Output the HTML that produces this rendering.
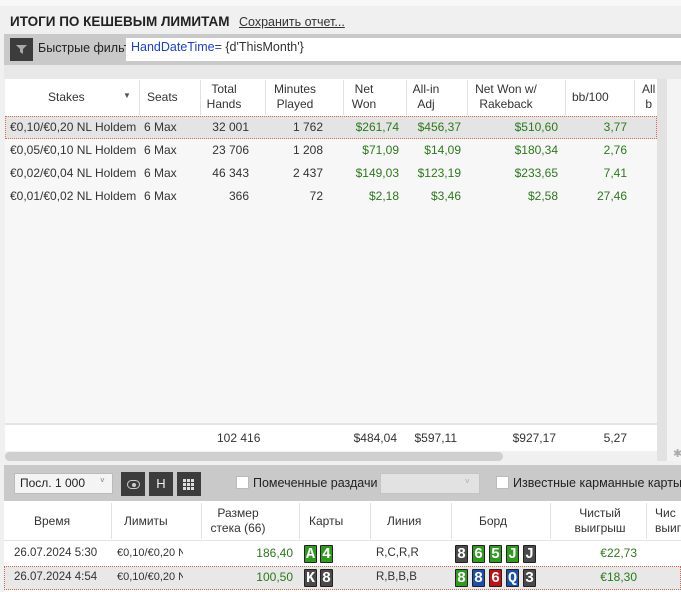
<!DOCTYPE html>
<html><head><meta charset="utf-8"><style>
*{margin:0;padding:0;box-sizing:border-box}
body{width:681px;height:592px;overflow:hidden;background:#f0f0f0;font-family:"Liberation Sans","Noto Sans CJK SC",sans-serif;font-size:12px;color:#333;position:relative}
.a{position:absolute;white-space:nowrap}
.r{text-align:right}.c{text-align:center}
.g{color:#2a7a1a}
.card{position:absolute;width:13px;height:18px;color:#fff;font:bold 15px/18px "Liberation Mono",monospace;text-align:center;border:1px solid #222;border-radius:1px}
.k{background:#4a4a4a}.gr{background:#2e9a1e}.rd{background:#c41010}.bl{background:#1a4fb0}
.hd{color:#333;line-height:15px}
.vl{position:absolute;width:1px;background:#e0e0e0}
</style></head><body>
<div class="a" style="left:0;top:0;width:681px;height:6px;background:#f8f8f8"></div>
<div class="a" style="left:10px;top:14px;font-weight:bold;font-size:13.5px;color:#222">ИТОГИ ПО КЕШЕВЫМ ЛИМИТАМ</div>
<div class="a" style="left:239px;top:15px;font-size:12.5px;text-decoration:underline;color:#333">Сохранить отчет...</div>
<div class="a" style="left:4px;top:34px;width:677px;height:31px;background:#c9c9c9"></div>
<div class="a" style="left:10px;top:38px;width:23px;height:23px;background:#3c3c3c"></div>
<svg class="a" style="left:15px;top:44px" width="13" height="11"><path d="M1 1H12L8 5V10L5 8V5Z" fill="#aaa"/></svg>
<div class="a" style="left:38px;top:41px;font-size:12.5px;color:#222">Быстрые фильт</div>
<div class="a" style="left:126px;top:38px;width:555px;height:23px;background:#fff;padding:2px 5px;font-size:12.5px"><span style="color:#1a3fd0">HandDateTime=</span> {d'ThisMonth'}</div>
<div class="a" style="left:4px;top:65px;width:677px;height:14px;background:#e8e8e8"></div>
<!-- table -->
<div class="a" style="left:5px;top:79px;width:652px;height:372px;background:#f7f7f7"></div>
<div class="a" style="left:5px;top:79px;width:652px;height:37px;background:#fff"></div>
<div class="vl" style="left:139px;top:80px;height:35px"></div><div class="vl" style="left:200px;top:80px;height:35px"></div><div class="vl" style="left:265px;top:80px;height:35px"></div><div class="vl" style="left:343px;top:80px;height:35px"></div><div class="vl" style="left:406px;top:80px;height:35px"></div><div class="vl" style="left:467px;top:80px;height:35px"></div><div class="vl" style="left:565px;top:80px;height:35px"></div><div class="vl" style="left:634px;top:80px;height:35px"></div>
<div class="a hd" style="left:48px;top:90px">Stakes</div>
<div class="a" style="left:123px;top:91px;font-size:8px;color:#555">▼</div>
<div class="a hd" style="left:147px;top:90px">Seats</div>
<div class="a hd c" style="left:200px;top:82px;width:48px">Total<br>Hands</div>
<div class="a hd c" style="left:266px;top:82px;width:58px">Minutes<br>Played</div>
<div class="a hd c" style="left:343px;top:82px;width:42px">Net<br>Won</div>
<div class="a hd c" style="left:406px;top:82px;width:40px">All-in<br>Adj</div>
<div class="a hd c" style="left:466px;top:82px;width:80px">Net Won w/<br>Rakeback</div>
<div class="a hd" style="left:572px;top:90px">bb/100</div>
<div class="a hd" style="left:642px;top:82px">All<br>&nbsp;b</div>
<div class="a" style="left:5px;top:116px;width:652px;height:23px;background:#e4e4e4;border:1px dotted #d07050"></div>
<div class="a" style="left:10px;top:116px;line-height:23px">€0,10/€0,20 NL Holdem<br>€0,05/€0,10 NL Holdem<br>€0,02/€0,04 NL Holdem<br>€0,01/€0,02 NL Holdem</div>
<div class="a" style="left:144px;top:116px;line-height:23px">6 Max<br>6 Max<br>6 Max<br>6 Max</div>
<div class="a r" style="left:200px;top:116px;width:49px;line-height:23px">32 001<br>23 706<br>46 343<br>366</div>
<div class="a r" style="left:266px;top:116px;width:57px;line-height:23px">1 762<br>1 208<br>2 437<br>72</div>
<div class="a r g" style="left:340px;top:116px;width:59px;line-height:23px">$261,74<br>$71,09<br>$149,03<br>$2,18</div>
<div class="a r g" style="left:400px;top:116px;width:61px;line-height:23px">$456,37<br>$14,09<br>$123,19<br>$3,46</div>
<div class="a r g" style="left:470px;top:116px;width:88px;line-height:23px">$510,60<br>$180,34<br>$233,65<br>$2,58</div>
<div class="a r g" style="left:580px;top:116px;width:47px;line-height:23px">3,77<br>2,76<br>7,41<br>27,46</div>
<div class="a" style="left:5px;top:423px;width:652px;height:28px;background:#fff;border-top:2px solid #e4e4e4"></div>
<div class="a" style="left:217px;top:431px">102 416</div>
<div class="a r" style="left:340px;top:431px;width:57px">$484,04</div>
<div class="a r" style="left:400px;top:431px;width:57px">$597,11</div>
<div class="a r" style="left:470px;top:431px;width:86px">$927,17</div>
<div class="a r" style="left:580px;top:431px;width:47px">5,27</div>
<div class="a" style="left:5px;top:452px;width:498px;height:9px;background:#cfcfcf;border-radius:5px"></div>
<div class="a" style="left:657px;top:79px;width:10px;height:382px;background:#e2e2e2"></div>
<div class="a" style="left:667px;top:79px;width:14px;height:382px;background:#f4f4f4"></div>
<div class="a" style="left:673px;top:447px;color:#aaa;font-size:11px">✱</div>
<!-- toolbar -->
<div class="a" style="left:4px;top:465px;width:677px;height:36px;background:#c9c9c9"></div>
<div class="a" style="left:14px;top:473px;width:99px;height:21px;background:#f4f4f4;border:1px solid #bbb;padding:2px 5px;font-size:12px;color:#222">Посл. 1 000<span style="position:absolute;left:85px;top:2px;font-size:8px;color:#777">˅</span></div>
<div class="a" style="left:121px;top:472px;width:24px;height:24px;background:#3c3c3c"></div>
<div class="a" style="left:127px;top:480px;width:13px;height:9px;border:1.5px solid #ccc;border-radius:5px"></div>
<div class="a" style="left:132px;top:483px;width:4px;height:4px;background:#ccc;border-radius:2px"></div>
<div class="a" style="left:149px;top:472px;width:24px;height:24px;background:#3c3c3c;color:#eee;text-align:center;line-height:24px;font-size:13px">H</div>
<div class="a" style="left:177px;top:472px;width:24px;height:24px;background:#3c3c3c"></div>
<div class="a" style="left:183px;top:478px;width:12px;height:12px;background:repeating-linear-gradient(90deg,#ddd 0 3px,transparent 3px 4px),#3c3c3c;-webkit-mask:repeating-linear-gradient(0deg,#000 0 3px,transparent 3px 4px)"></div>
<div class="a" style="left:236px;top:476px;width:13px;height:13px;background:#fff;border:1px solid #bbb"></div>
<div class="a" style="left:253px;top:476px;font-size:12.5px;color:#222">Помеченные раздачи</div>
<div class="a" style="left:380px;top:473px;width:100px;height:21px;background:#e2e2e2;border:1px solid #c4c4c4"><span style="position:absolute;left:84px;top:3px;font-size:8px;color:#aaa">˅</span></div>
<div class="a" style="left:496px;top:476px;width:13px;height:13px;background:#fff;border:1px solid #bbb"></div>
<div class="a" style="left:513px;top:476px;font-size:12.5px;color:#222">Известные карманные карты</div>
<!-- bottom table -->
<div class="a" style="left:4px;top:501px;width:677px;height:91px;background:#fff"></div>
<div class="vl" style="left:111px;top:503px;height:36px"></div><div class="vl" style="left:201px;top:503px;height:36px"></div><div class="vl" style="left:299px;top:503px;height:36px"></div><div class="vl" style="left:370px;top:503px;height:36px"></div><div class="vl" style="left:451px;top:503px;height:36px"></div><div class="vl" style="left:550px;top:503px;height:36px"></div><div class="vl" style="left:646px;top:503px;height:36px"></div>
<div class="a" style="left:4px;top:540px;width:677px;height:1px;background:#e4e4e4"></div>
<div class="a hd" style="left:34px;top:514px">Время</div>
<div class="a hd" style="left:124px;top:514px">Лимиты</div>
<div class="a hd c" style="left:205px;top:506px;width:66px">Размер<br>стека (66)</div>
<div class="a hd" style="left:309px;top:514px">Карты</div>
<div class="a hd" style="left:387px;top:514px">Линия</div>
<div class="a hd" style="left:479px;top:514px">Борд</div>
<div class="a hd c" style="left:560px;top:506px;width:80px">Чистый<br>выигрыш</div>
<div class="a hd" style="left:655px;top:506px">Чис<br>выиг</div>
<div class="a" style="left:4px;top:566px;width:677px;height:24px;background:#e8e8e8;border:1px dotted #c07050"></div>
<div class="a" style="left:14px;top:541px;line-height:24px;font-size:11.5px">26.07.2024 5:30<br>26.07.2024 4:54</div>
<div class="a" style="left:117px;top:541px;line-height:24px;font-size:11px;width:66px;overflow:hidden">€0,10/€0,20 NL H<br>€0,10/€0,20 NL H</div>
<div class="a r g" style="left:240px;top:541px;width:53px;line-height:24px">186,40<br>100,50</div>
<div class="a" style="left:376px;top:541px;line-height:24px;font-size:11.5px">R,C,R,R<br>R,B,B,B</div>
<div class="a r g" style="left:580px;top:541px;width:57px;line-height:24px">€22,73<br>€18,30</div>
<div class="card gr" style="left:304px;top:545px">A</div><div class="card gr" style="left:320px;top:545px">4</div>
<div class="card k" style="left:304px;top:569px">K</div><div class="card k" style="left:320px;top:569px">8</div>
<div class="card k" style="left:455px;top:545px">8</div><div class="card gr" style="left:472px;top:545px">6</div><div class="card gr" style="left:489px;top:545px">5</div><div class="card gr" style="left:506px;top:545px">J</div><div class="card k" style="left:523px;top:545px">J</div>
<div class="card gr" style="left:455px;top:569px">8</div><div class="card bl" style="left:472px;top:569px">8</div><div class="card rd" style="left:489px;top:569px">6</div><div class="card bl" style="left:506px;top:569px">Q</div><div class="card k" style="left:523px;top:569px">3</div>
</body></html>
